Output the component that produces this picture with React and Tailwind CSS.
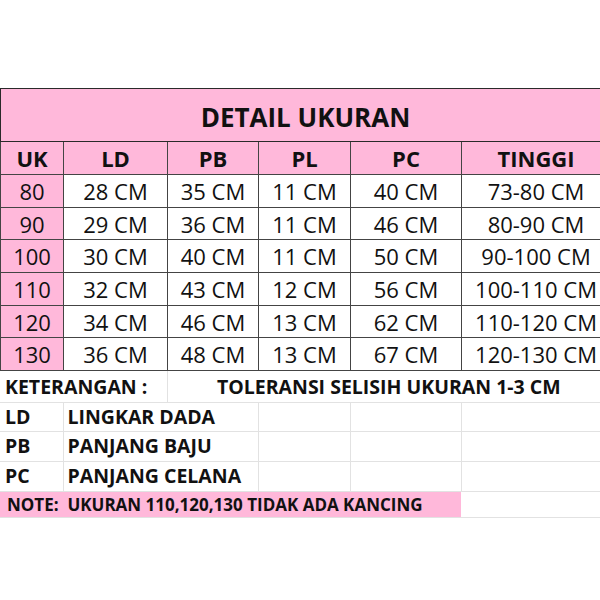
import React from 'react';

const rows = [
    ['80', '28 CM', '35 CM', '11 CM', '40 CM', '73-80 CM'],
    ['90', '29 CM', '36 CM', '11 CM', '46 CM', '80-90 CM'],
    ['100', '30 CM', '40 CM', '11 CM', '50 CM', '90-100 CM'],
    ['110', '32 CM', '43 CM', '12 CM', '56 CM', '100-110 CM'],
    ['120', '34 CM', '46 CM', '13 CM', '62 CM', '110-120 CM'],
    ['130', '36 CM', '48 CM', '13 CM', '67 CM', '120-130 CM'],
];

const heads = ['UK', 'LD', 'PB', 'PL', 'PC', 'TINGGI'];

const Cols = () => (
    <colgroup>
        <col className="w-[63px]" />
        <col className="w-[104px]" />
        <col className="w-[91px]" />
        <col className="w-[92px]" />
        <col className="w-[111px]" />
        <col className="w-[149px]" />
    </colgroup>
);

const App = () => {
    return (
        <div
            className="w-[600px] h-[600px] overflow-hidden bg-white text-[#111]"
            style={{ fontFamily: '"Open Sans", "Noto Sans", sans-serif' }}
        >
            <div className="h-[88px]" />
            <table className="w-[610px] table-fixed border-collapse">
                <Cols />
                <tbody>
                    <tr className="h-[53px]">
                        <td colSpan={6} className="border border-[#2a2a2a] bg-[#ffb8da] text-center text-[26px] font-bold leading-none pt-1">
                            DETAIL UKURAN
                        </td>
                    </tr>
                    <tr className="h-[33px]">
                        {heads.map(h => (
                            <td key={h} className="border border-[#444] bg-[#ffb8da] text-center text-[22px] font-bold leading-none">
                                {h}
                            </td>
                        ))}
                    </tr>
                    {rows.map(r => (
                        <tr key={r[0]} className="h-[32.7px]">
                            {r.map((v, i) => (
                                <td
                                    key={i}
                                    className={`border border-[#444] text-center text-[22px] leading-none whitespace-nowrap ${i === 0 ? 'bg-[#ffb8da]' : 'bg-white'}`}
                                >
                                    {v}
                                </td>
                            ))}
                        </tr>
                    ))}
                </tbody>
            </table>

            <table className="w-[610px] table-fixed border-collapse text-[19.5px] font-bold leading-none">
                <Cols />
                <tbody>
                    <tr className="h-[31px]">
                        <td colSpan={2} className="border-b border-r border-[#e2e2e2] pl-[5px] whitespace-nowrap">KETERANGAN :</td>
                        <td colSpan={4} className="border-b border-[#e2e2e2] text-center whitespace-nowrap">TOLERANSI SELISIH UKURAN 1-3 CM</td>
                    </tr>
                    {[
                        ['LD', 'LINGKAR DADA', 'h-[29px]'],
                        ['PB', 'PANJANG BAJU', 'h-[30px]'],
                        ['PC', 'PANJANG CELANA', 'h-[30px]'],
                    ].map(([k, v, h]) => (
                        <tr key={k} className={h}>
                            <td className="border-b border-r border-[#e2e2e2] pl-[5px]">{k}</td>
                            <td colSpan={2} className="border-b border-r border-[#e2e2e2] pl-[4px] whitespace-nowrap">{v}</td>
                            <td className="border-b border-r border-[#e2e2e2]" />
                            <td className="border-b border-r border-[#e2e2e2]" />
                            <td className="border-b border-[#e2e2e2]" />
                        </tr>
                    ))}
                    <tr className="h-[26px]">
                        <td colSpan={5} className="border-b border-[#e2e2e2] bg-[#ffb8da] pl-[7px] text-[17px] whitespace-nowrap">
                            NOTE:&nbsp;&nbsp;UKURAN 110,120,130 TIDAK ADA KANCING
                        </td>
                        <td className="border-b border-[#e2e2e2]" />
                    </tr>
                </tbody>
            </table>
        </div>
    );
};

export default App;
